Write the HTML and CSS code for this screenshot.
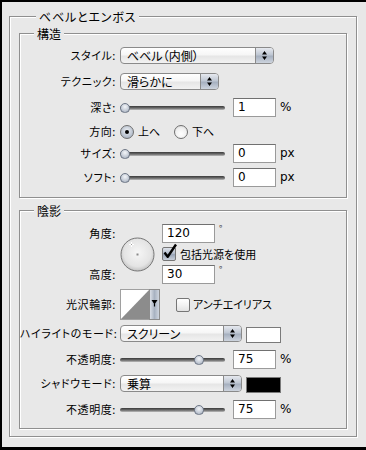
FILE: index.html
```html
<!DOCTYPE html>
<html lang="ja">
<head>
<meta charset="utf-8">
<title>ベベルとエンボス</title>
<link rel="stylesheet" href="styles.css">
</head>
<body>
<div class="window">
  <div class="group outer">
    <div class="title">ベベルとエンボス</div>

    <div class="group sub struct">
      <div class="title">構造</div>

      <div class="row r-style">
        <span class="label">スタイル:</span>
        <div class="select w154">
          <span class="sel-text">ベベル（内側）</span>
          <span class="stepper"><svg width="5" height="9" viewBox="0 0 5 9"><path d="M2.5 0L5 3.5H0z M0 5.5h5L2.5 9z" fill="#000"/></svg></span>
        </div>
      </div>

      <div class="row r-tech">
        <span class="label">テクニック:</span>
        <div class="select w99">
          <span class="sel-text">滑らかに</span>
          <span class="stepper"><svg width="5" height="9" viewBox="0 0 5 9"><path d="M2.5 0L5 3.5H0z M0 5.5h5L2.5 9z" fill="#000"/></svg></span>
        </div>
      </div>

      <div class="row r-depth">
        <span class="label">深さ:</span>
        <div class="slider"><div class="track"></div><span class="thumb" style="left:0px"></span></div>
        <div class="field">1</div>
        <span class="unit">%</span>
      </div>

      <div class="row r-dir">
        <span class="label">方向:</span>
        <span class="radio on"></span>
        <span class="opt">上へ</span>
        <span class="radio off"></span>
        <span class="opt">下へ</span>
      </div>

      <div class="row r-size">
        <span class="label">サイズ:</span>
        <div class="slider"><div class="track"></div><span class="thumb" style="left:0px"></span></div>
        <div class="field">0</div>
        <span class="unit">px</span>
      </div>

      <div class="row r-soft">
        <span class="label">ソフト:</span>
        <div class="slider"><div class="track"></div><span class="thumb" style="left:0px"></span></div>
        <div class="field">0</div>
        <span class="unit">px</span>
      </div>
    </div>

    <div class="group sub shade">
      <div class="title">陰影</div>

      <div class="angle">
        <span class="label lbl-angle">角度:</span>
        <svg class="dial" width="35" height="35" viewBox="0 0 35 35">
          <defs>
            <radialGradient id="dg" cx="50%" cy="45%" r="55%">
              <stop offset="0" stop-color="#f6f6f6"/>
              <stop offset="0.75" stop-color="#e4e4e4"/>
              <stop offset="1" stop-color="#c2c2c2"/>
            </radialGradient>
          </defs>
          <circle cx="17.5" cy="17.5" r="16.5" fill="url(#dg)" stroke="#767676"/>
          <rect x="16.5" y="16.5" width="2" height="2" fill="#8a8a8a"/>
          <path d="M11.5 5v5 M9 7.5h5" stroke="#ffffff" stroke-width="1"/>
          <rect x="11" y="7" width="1" height="1" fill="#9a9a9a"/>
        </svg>
        <div class="cell a1">
          <div class="field w53">120</div>
          <span class="deg">°</span>
        </div>
        <div class="cell a2">
          <span class="check on"><svg class="tick" width="16" height="17" viewBox="0 0 16 17"><path d="M2.5 9.5l3.2 4.2L14 1.5" fill="none" stroke="#000" stroke-width="2.4" stroke-linejoin="round"/></svg></span>
          <span class="check-text">包括光源を使用</span>
        </div>
        <span class="label lbl-alt">高度:</span>
        <div class="cell a3">
          <div class="field w53">30</div>
          <span class="deg">°</span>
        </div>
      </div>

      <div class="row r-contour">
        <span class="label">光沢輪郭:</span>
        <svg class="contour" width="40" height="31" viewBox="0 0 40 31">
          <defs>
            <linearGradient id="cs" x1="0" x2="1" y1="0" y2="0">
              <stop offset="0" stop-color="#dfe3ea"/>
              <stop offset="0.5" stop-color="#a8b2c1"/>
              <stop offset="1" stop-color="#d3d9e2"/>
            </linearGradient>
          </defs>
          <rect x="0.5" y="0.5" width="39" height="30" fill="#ffffff" stroke="#a0a0a0"/>
          <polygon points="1,30 29,1 29,30" fill="#8c8c8c"/>
          <rect x="29.5" y="0.5" width="10" height="30" fill="url(#cs)" stroke="#8c8c8c"/>
          <path d="M31.5 11h6l-3 4.5z" fill="#000"/>
          <path d="M34.5 15v2.5" stroke="#000" stroke-width="1.2"/>
        </svg>
        <span class="check off aa"></span>
        <span class="check-text">アンチエイリアス</span>
      </div>

      <div class="row r-hmode">
        <span class="label">ハイライトのモード:</span>
        <div class="select w122">
          <span class="sel-text">スクリーン</span>
          <span class="stepper"><svg width="5" height="9" viewBox="0 0 5 9"><path d="M2.5 0L5 3.5H0z M0 5.5h5L2.5 9z" fill="#000"/></svg></span>
        </div>
        <span class="swatch white"></span>
      </div>

      <div class="row r-op1">
        <span class="label">不透明度:</span>
        <div class="slider"><div class="track"></div><span class="thumb" style="left:74px"></span></div>
        <div class="field">75</div>
        <span class="unit">%</span>
      </div>

      <div class="row r-smode">
        <span class="label">シャドウモード:</span>
        <div class="select w122">
          <span class="sel-text">乗算</span>
          <span class="stepper"><svg width="5" height="9" viewBox="0 0 5 9"><path d="M2.5 0L5 3.5H0z M0 5.5h5L2.5 9z" fill="#000"/></svg></span>
        </div>
        <span class="swatch black"></span>
      </div>

      <div class="row r-op2">
        <span class="label">不透明度:</span>
        <div class="slider"><div class="track"></div><span class="thumb" style="left:74px"></span></div>
        <div class="field">75</div>
        <span class="unit">%</span>
      </div>
    </div>
  </div>
</div>
</body>
</html>
```

FILE: styles.css
```css
* { box-sizing: border-box; }
html, body { margin: 0; padding: 0; }
body {
  background: #e8e8e8;
  font-family: "Noto Sans CJK JP", "Noto Sans", sans-serif;
  font-size: 11px;
  color: #000;
}
.window {
  width: 366px;
  height: 450px;
  border-top: 2px solid #000;
  border-left: 2px solid #000;
  border-bottom: 3px solid #000;
  padding: 14px 0 0 7px;
  background: #e8e8e8;
  overflow: hidden;
}
.group {
  border: 1px solid #8f8f8f;
  box-shadow: 1px 1px 0 #fff, inset 1px 1px 0 #fff;
}
.outer {
  width: 348px;
  padding: 0 9px 7px 9px;
}
.title {
  width: fit-content;
  margin-top: -8px;
  height: 15px;
  line-height: 15px;
  padding: 0 3px;
  background: #e8e8e8;
  font-size: 12px;
  font-feature-settings: "palt";
  white-space: nowrap;
}
.outer > .title { margin-left: 17px; letter-spacing: 0.8px; }
.sub > .title { margin-left: 14px; }
.sub { width: 328px; }
.struct { margin-top: 9px; padding-bottom: 10px; }
.shade { margin-top: 12px; padding-bottom: 9px; }

.row { display: flex; align-items: center; height: 19px; }
.label {
  width: 96px;
  flex: none;
  margin-right: 4px;
  text-align: right;
  white-space: nowrap;
  font-feature-settings: "palt";
  letter-spacing: 0.6px;
  line-height: 15px;
}

.r-style { margin-top: 5px; }
.r-tech { margin-top: 7px; }
.r-depth { margin-top: 7px; }
.r-dir { margin-top: 5px; }
.r-size { margin-top: 3px; }
.r-soft { margin-top: 5px; }

/* select */
.select {
  display: flex;
  height: 17px;
  border: 1px solid #8a8a8a;
  border-radius: 4px;
  background: linear-gradient(#ffffff, #f6f6f6 45%, #e6e6e6 55%, #f2f2f2);
  overflow: hidden;
  flex: none;
}
.w154 { width: 154px; }
.w99 { width: 99px; }
.w122 { width: 122px; }
.sel-text {
  flex: 1;
  padding-left: 6px;
  line-height: 15px;
  font-size: 12px;
  font-feature-settings: "palt";
  white-space: nowrap;
}
.stepper {
  width: 18px;
  flex: none;
  border-left: 1px solid #8a8a8a;
  background: linear-gradient(#e6e9ef, #bfc7d3 45%, #a6b0bf 55%, #cdd4de);
  display: flex;
  align-items: center;
  justify-content: center;
}
.stepper svg { display: block; }

/* slider */
.slider {
  position: relative;
  width: 105px;
  height: 12px;
  flex: none;
  display: flex;
  align-items: center;
}
.track {
  width: 100%;
  height: 4px;
  border-radius: 2px;
  background: linear-gradient(#3a3a3a, #6e6e6e 55%, #bdbdbd);
}
.thumb {
  position: absolute;
  top: 1px;
  width: 10px;
  height: 10px;
  border-radius: 50% 50% 45% 45%;
  border: 1px solid #6e7786;
  background: radial-gradient(circle at 50% 35%, #f4f6f9, #c3cad5 60%, #96a1b2);
}

/* text field */
.field {
  width: 43px;
  height: 19px;
  flex: none;
  margin-left: 8px;
  border: 1px solid #9a9a9a;
  border-top-color: #707070;
  background: #fff;
  padding-left: 4px;
  font-family: "DejaVu Sans", sans-serif;
  font-size: 12px;
  line-height: 17px;
}
.unit {
  margin-left: 4px;
  font-family: "DejaVu Sans", sans-serif;
  font-size: 12px;
  line-height: 15px;
}

/* radio */
.radio {
  width: 14px;
  height: 14px;
  flex: none;
  border-radius: 50%;
  border: 1px solid #6f6f6f;
  display: flex;
  align-items: center;
  justify-content: center;
}
.radio.on {
  background: radial-gradient(circle at 50% 40%, #eef1f5, #b7c0cd 65%, #8f9bad);
}
.radio.on::after {
  content: "";
  width: 4px;
  height: 4px;
  border-radius: 50%;
  background: #000;
}
.radio.off {
  background: radial-gradient(circle at 50% 65%, #ffffff, #f0f0f0 55%, #cfcfcf);
  margin-left: 14px;
}
.opt {
  margin-left: 4px;
  line-height: 15px;
}

/* angle area */
.angle {
  display: grid;
  grid-template-columns: 96px 35px auto;
  grid-template-rows: 19px 22px 19px;
  column-gap: 4px;
  margin-top: 6px;
}
.angle .label { grid-column: 1; margin-right: 0; align-self: center; }
.lbl-angle { grid-row: 1; }
.lbl-alt { grid-row: 3; }
.dial { grid-column: 2; grid-row: 1 / 4; align-self: center; display: block; }
.cell { grid-column: 3; display: flex; align-items: center; margin-left: 3px; }
.a1 { grid-row: 1; }
.a2 { grid-row: 2; }
.a3 { grid-row: 3; }
.cell .field { margin-left: 0; }
.w53 { width: 53px; }
.deg {
  align-self: flex-start;
  margin-left: 4px;
  font-size: 9px;
  line-height: 9px;
  color: #444;
}

/* checkbox */
.check {
  position: relative;
  width: 14px;
  height: 14px;
  flex: none;
  border: 1px solid #767676;
  border-radius: 2px;
}
.check.on {
  background: linear-gradient(#dde2ea, #b3bccb 45%, #98a4b6 55%, #c9d0db);
}
.check.off {
  background: linear-gradient(#ffffff, #f2f2f2 50%, #e2e2e2);
}
.tick {
  position: absolute;
  left: -1px;
  top: -5px;
}
.check-text {
  margin-left: 4px;
  line-height: 15px;
  font-feature-settings: "palt";
  white-space: nowrap;
}

/* contour */
.r-contour { height: 31px; margin-top: 5px; }
.contour { display: block; flex: none; }
.aa { margin-left: 16px; }
.aa + .check-text { margin-left: 3px; }

.r-hmode { margin-top: 4px; }
.r-op1 { margin-top: 7px; }
.r-smode { margin-top: 5px; }
.r-op2 { margin-top: 7px; }

.swatch {
  width: 35px;
  height: 16px;
  flex: none;
  margin-left: 4px;
  align-self: flex-end;
  border: 1px solid #7a7a7a;
}
.swatch.white { background: #fff; }
.swatch.black { background: #000; }
```
